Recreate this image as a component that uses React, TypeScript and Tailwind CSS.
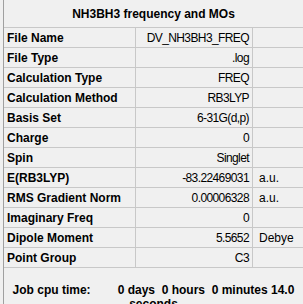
import React from 'react';

interface SummaryRow {
  label: string;
  value: string;
  unit?: string;
}

const ROWS: SummaryRow[] = [
  { label: 'File Name', value: 'DV_NH3BH3_FREQ' },
  { label: 'File Type', value: '.log' },
  { label: 'Calculation Type', value: 'FREQ' },
  { label: 'Calculation Method', value: 'RB3LYP' },
  { label: 'Basis Set', value: '6-31G(d,p)' },
  { label: 'Charge', value: '0' },
  { label: 'Spin', value: 'Singlet' },
  { label: 'E(RB3LYP)', value: '-83.22469031', unit: 'a.u.' },
  { label: 'RMS Gradient Norm', value: '0.00006328', unit: 'a.u.' },
  { label: 'Imaginary Freq', value: '0' },
  { label: 'Dipole Moment', value: '5.5652', unit: 'Debye' },
  { label: 'Point Group', value: 'C3' },
];

export default function App() {
  return (
    <div className="w-[303px] h-[304px] overflow-hidden bg-[#f0f0f0] text-black font-['Liberation_Sans',Arial,sans-serif] text-[12px]">
      <div className="ml-[3px] h-full border-l border-[#a0a0a0]">
        {/* Заголовок */}
        <div className="h-[27px] flex items-center justify-center font-bold">
          NH3BH3 frequency and MOs
        </div>

        {/* Таблица свойств */}
        <div className="border-t border-[#c8c8c8]">
          {ROWS.map((row) => (
            <div key={row.label} className="flex h-[20px] border-b border-[#c8c8c8]">
              <div className="w-[132px] shrink-0 border-r border-[#c8c8c8] pl-[3px] flex items-center font-bold">
                {row.label}
              </div>
              <div className="w-[117px] shrink-0 border-r border-[#c8c8c8] pr-[3px] flex items-center justify-end tracking-[-0.6px]">
                {row.value}
              </div>
              <div className="flex-1 pl-[6px] flex items-center">{row.unit}</div>
            </div>
          ))}
        </div>

        {/* Время расчёта */}
        <p className="mt-[15px] px-[2px] text-center font-bold leading-[14px]">
          Job cpu time:<span className="inline-block w-[27px]" />0 days{'\u00a0 '}0 hours{'\u00a0 '}0 minutes 14.0 seconds
        </p>
      </div>
    </div>
  );
}
